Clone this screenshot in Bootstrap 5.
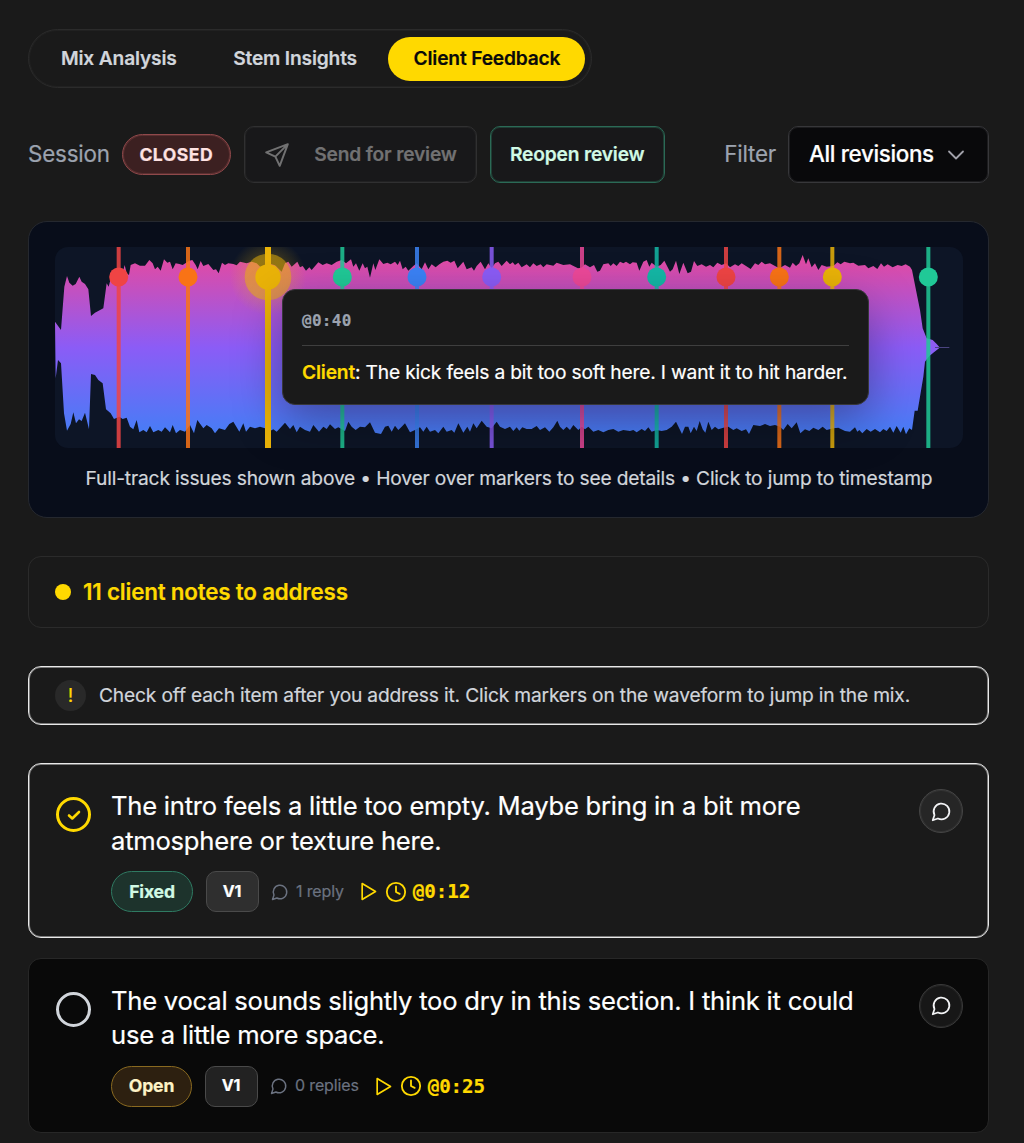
<!DOCTYPE html>
<html lang="en">
<head>
<meta charset="utf-8">
<meta name="viewport" content="width=device-width, initial-scale=1">
<title>Client Feedback</title>
<link href="https://cdn.jsdelivr.net/npm/bootstrap@5.3.0/dist/css/bootstrap.min.css" rel="stylesheet">
<style>
body{background:#1a1a1a;color:#fff;font-family:Inter,"Liberation Sans",sans-serif;font-size:19.2px;line-height:1.35;overflow:hidden;-webkit-text-stroke:.2px}
main *{letter-spacing:-.009em}
.page{padding:29px 35px 0 28px;gap:38px}
.page>*{flex:none}
svg{display:block;flex:none}
.ico{fill:none;stroke:currentColor;stroke-linecap:round;stroke-linejoin:round}
.tabs{width:564px;height:59px;padding:7px 6px 7px 7px;border:1px solid #2b2b2b;box-shadow:inset 0 0 0 1px #212121;border-radius:30px;font-weight:600;color:#d1d5db}
.tabs .nav-link{height:44px;padding:0 25px;color:#d1d5db;border-radius:22px;display:flex;align-items:center;white-space:nowrap}
.tabs .nav-link.active{background:#ffd900;color:#0a0a0a}
.tabs .nav-item+.nav-item{margin-left:6.500px}
.toolbar{height:57px}
.lbl{font-size:22.4px;color:#9ca3af}
.flt{margin-left:auto;margin-right:12px}
.pill{height:41px;padding:0 16px;border:1px solid;border-radius:21px;font-weight:700;font-size:17.6px;display:flex;align-items:center}
.pill-closed{background:#3c2021;border-color:#90494b;box-shadow:inset 0 0 0 1px #5a2f30;color:#fee2e2;letter-spacing:.45px;width:109px;justify-content:center}
.btn-line{height:57px;border:1px solid #303031;box-shadow:inset 0 0 0 1px #212122;border-radius:10px;background:#18181a;font-size:19.2px;font-weight:600;padding:0 19px;display:flex;align-items:center;white-space:nowrap}
.btn-send{color:#717172;width:233px;justify-content:space-between}
.btn-reopen{color:#d1fae5;border-color:#2b6a56;box-shadow:inset 0 0 0 1px #203d34;width:175px;justify-content:center}
.gap-start{margin-left:13px}
.pill-closed.gap-start{margin-left:12px}
.select-box{width:201px;height:57px;border:1px solid #37373a;box-shadow:inset 0 0 0 1px #1c1c1e;border-radius:10px;background:#09090b;font-size:22.4px;font-weight:500;letter-spacing:-.015em;padding:0 22px 0 20px}
.select-box span{letter-spacing:-.016em}
.chev{stroke:#a1a1aa}
.wave-card{height:297px;padding:25px 25px 25px 26px;border:1px solid #25282f;border-radius:19px;background:#080d1a}
.wave{height:201px;border-radius:13px;background:#0d1526;position:relative}
.wave>svg{border-radius:13px}
.hint{font-size:19.2px;color:#d1d5db;height:62px}
.tip{position:absolute;left:227px;top:42px;width:587px;height:116px;background:#1a1a1a;border:1px solid #37373a;border-radius:13px;padding:0 19px;box-shadow:0 16px 48px rgba(0,0,0,.35)}
.tip-time{height:56px;padding-top:6px;border-bottom:1px solid #3f3f3f;color:#9ca3af;font:700 16px "DejaVu Sans Mono",monospace;letter-spacing:.3px}
.tip-text{height:53px;white-space:nowrap}
.yel{color:#ffd900}
.notes{height:72px;border:1px solid #2b2b2b;border-radius:13px;padding:0 26px;font-size:22.4px;font-weight:600;gap:12px;color:#ffd900}
.spot{width:16px;height:16px;border-radius:50%;background:#ffd900}
.white-line{border:1px solid #e9e9e9;box-shadow:inset 0 0 0 1px #7a7a7a;border-radius:13px}
.tipbar{height:59px;padding:0 26px;gap:13px;color:#d1d5db}
.bang{width:31px;height:31px;border-radius:50%;background:#292929;font-size:19.2px}
.note-card{height:175px;padding:25px 25px 25px 26px}
.note-dark{margin-top:-18px;padding-top:24.500px;background:#090909;border:1px solid #272727;border-radius:13px}
.msg{font-size:25.6px;line-height:34.5px;width:770px;margin-bottom:13px}
.ring{width:35px;height:35px;border:3px solid #d1d5db;border-radius:50%;margin:8px 20px 0 1px;flex:none}
.ring-done{border-color:#ffd900;color:#ffd900}
.meta-row{height:41px}
.pill-fixed{background:#1d332c;border-color:#2f7a62;color:#d1fae5;width:82px;justify-content:center;padding:0}
.pill-open{background:#2d2010;border-color:#8a6a20;color:#fef3c7;width:81px;justify-content:center;padding:0}
.ver{width:53px;height:41px;border:1px solid #4a4a4a;border-radius:10px;background:#2f2f2f;font-size:16px;font-weight:700;margin:0 12.500px}
.ver-dim{background:#222}
.replies{font-size:16px;color:#6b7280;gap:7px}
.stamp{color:#ffd900;font:700 19.2px "DejaVu Sans Mono",monospace;margin-left:14px;letter-spacing:-.1px}
.clk{margin:0 6px 0 7px}
.round-btn{width:44px;height:44px;border:1px solid #454545;box-shadow:inset 0 0 0 1px #333;border-radius:50%;background:#262626;color:#f3f4f6;padding:0;flex:none}
.round-dim{background:#171717;border-color:#3a3a3a;box-shadow:inset 0 0 0 1px #262626}
</style>
</head>
<body>
<svg width="0" height="0" class="position-absolute">
<symbol id="bubble" viewBox="0 0 24 24"><path d="M7.9 20A9 9 0 1 0 4 16.1L2 22Z"/></symbol>
<symbol id="play" viewBox="0 0 24 24"><path d="M5 2.500l16 9.500-16 9.500z"/></symbol>
<symbol id="clock" viewBox="0 0 24 24"><circle cx="12" cy="12" r="10"/><path d="M12 6v6l4 2"/></symbol>
</svg>
<main class="page d-flex flex-column">
  <ul class="nav tabs flex-nowrap">
    <li class="nav-item"><a class="nav-link">Mix Analysis</a></li>
    <li class="nav-item"><a class="nav-link">Stem Insights</a></li>
    <li class="nav-item"><a class="nav-link active">Client Feedback</a></li>
  </ul>

  <div class="toolbar d-flex align-items-center">
    <span class="lbl">Session</span>
    <span class="pill pill-closed gap-start">CLOSED</span>
    <button class="btn-line btn-send gap-start">
      <svg class="ico" width="26" height="26" viewBox="0 0 24 24" stroke-width="1.800"><path d="M22 2 2 9.500l8.500 4 4 8.500zM22 2 10.500 13.500"/></svg>
      <span>Send for review</span>
    </button>
    <button class="btn-line btn-reopen gap-start">Reopen review</button>
    <span class="lbl flt">Filter</span>
    <div class="select-box d-flex align-items-center justify-content-between">
      <span>All revisions</span>
      <svg class="ico chev" width="20" height="20" viewBox="0 0 20 20" stroke-width="1.800"><path d="M3 6.500l7 7 7-7"/></svg>
    </div>
  </div>

  <section class="wave-card">
    <div class="wave">
      <svg width="908" height="201" viewBox="0 0 2724 603" preserveAspectRatio="none">
        <defs>
          <linearGradient id="tone" gradientUnits="userSpaceOnUse" x1="0" y1="0" x2="0" y2="603"><stop offset="0" stop-color="#ec4899"/><stop offset=".5" stop-color="#8b5cf6"/><stop offset="1" stop-color="#3b82f6"/></linearGradient>
          <radialGradient id="glow"><stop offset=".5" stop-color="#eab308" stop-opacity=".22"/><stop offset="1" stop-color="#eab308" stop-opacity="0"/></radialGradient>
        </defs>
        <path id="shape" fill="url(#tone)"/>
        <path d="M2640 301.500h43" stroke="#4a4480" stroke-width="3"/>
        <g id="pins"></g>
      </svg>
      <div class="tip">
        <div class="tip-time d-flex align-items-center">@0:40</div>
        <div class="tip-text d-flex align-items-center"><span><strong class="yel fw-semibold">Client</strong>: The kick feels a bit too soft here. I want it to hit harder.</span></div>
      </div>
    </div>
    <div class="hint d-flex align-items-center justify-content-center">Full-track issues shown above • Hover over markers to see details • Click to jump to timestamp</div>
  </section>

  <section class="notes d-flex align-items-center"><span class="spot"></span><span>11 client notes to address</span></section>

  <section class="tipbar white-line d-flex align-items-center">
    <span class="bang yel d-flex align-items-center justify-content-center">!</span>
    <span>Check off each item after you address it. Click markers on the waveform to jump in the mix.</span>
  </section>

  <article class="note-card white-line d-flex">
    <span class="ring ring-done d-flex align-items-center justify-content-center"><svg class="ico" width="14" height="14" viewBox="0 0 14 14" stroke-width="2.600"><path d="M2 7.500l3.300 3L12 4"/></svg></span>
    <div>
      <div class="msg">The intro feels a little too empty. Maybe bring in a bit more atmosphere or texture here.</div>
      <div class="meta-row d-flex align-items-center">
        <span class="pill pill-fixed">Fixed</span>
        <span class="ver d-flex align-items-center justify-content-center">V1</span>
        <span class="replies d-flex align-items-center"><svg class="ico" width="18" height="18" stroke-width="1.900"><use href="#bubble"/></svg>1 reply</span>
        <span class="stamp d-flex align-items-center"><svg class="ico" width="20" height="21" stroke-width="2"><use href="#play"/></svg><svg class="ico clk" width="22" height="22" stroke-width="2"><use href="#clock"/></svg>@0:12</span>
      </div>
    </div>
    <button class="round-btn d-flex align-items-center justify-content-center ms-auto"><svg class="ico" width="21" height="21" stroke-width="2"><use href="#bubble"/></svg></button>
  </article>

  <article class="note-card note-dark d-flex">
    <span class="ring"></span>
    <div>
      <div class="msg">The vocal sounds slightly too dry in this section. I think it could use a little more space.</div>
      <div class="meta-row d-flex align-items-center">
        <span class="pill pill-open">Open</span>
        <span class="ver ver-dim d-flex align-items-center justify-content-center">V1</span>
        <span class="replies d-flex align-items-center"><svg class="ico" width="18" height="18" stroke-width="1.900"><use href="#bubble"/></svg>0 replies</span>
        <span class="stamp d-flex align-items-center"><svg class="ico" width="20" height="21" stroke-width="2"><use href="#play"/></svg><svg class="ico clk" width="22" height="22" stroke-width="2"><use href="#clock"/></svg>@0:25</span>
      </div>
    </div>
    <button class="round-btn round-dim d-flex align-items-center justify-content-center ms-auto"><svg class="ico" width="21" height="21" stroke-width="2"><use href="#bubble"/></svg></button>
  </article>
</main>
<script src="https://cdn.jsdelivr.net/npm/bootstrap@5.3.0/dist/js/bootstrap.bundle.min.js"></script>
<script>
// Waveform outline, in chunks: [x shift, y shift, "x,y x,y ..."]; upper edge left to right, then lower edge back.
const chunks = [
[-75,-81,"75,305 93,330 103,200 111,168 118,188 128,197 137,192 148,170 155,185 165,192 175,208 183,288 195,278 220,265 230,190 236,200 245,165 262,160 275,170 284,135 290,160 297,165 302,135 315,130 330,137 345,137 358,120 368,130 375,148 383,140 392,152 402,118 412,128 420,125 428,148 437,130 448,132 458,135 478,122 487,120 497,135 503,148 512,123 520,138 535,132 550,150 558,148 566,160 576,128 585,135 595,130 610,132 620,136 630,125 650,130 665,125 680,130 695,145 703,142 710,130 722,132 735,136 755,155 765,130"],
[645,-51,"55,95 65,110 82,95 90,112 98,108 108,122 118,112 125,120 145,97 158,105 170,100 185,105 200,95 215,90 228,100 243,88 250,110 258,100 268,122 278,100 285,115 292,110 300,143 310,100 316,120 328,88 340,102 352,98 362,103 375,95 383,105 390,92 398,118 407,110 415,122 430,108 440,100 455,118 465,97 475,118 485,103 497,112 508,103 520,95 532,92 542,98 553,92 563,115 580,95 590,118 605,112 612,122 620,108 632,95 645,118 655,100 665,115 675,100 685,95 695,108 710,92 720,103 728,97 735,105 745,98 755,112 770,103 780,112 790,100 800,108 812,103 820,112 830,103 850,107 860,98 880,105 900,103 915,110 930,118 945,103 960,112 972,105 982,125 990,122 1000,103 1015,100 1022,108 1030,100 1040,108 1050,95 1060,100 1068,95 1080,103"],
[1695,-51,"38,97 50,98 58,122 70,95 80,90 88,110 95,98 110,110 122,105 133,92 150,125 158,118 168,92 178,132 190,98 203,130 213,125 222,93 232,108 245,103 258,110 270,105 280,112 292,98 305,105 318,100 330,112 345,103 355,108 365,100 378,108 392,117 405,100 415,105 425,95 435,103 450,100 465,108 478,115 495,105 510,113 518,98 528,108 538,100 548,75 558,103 565,85 575,112 585,100 595,120 605,105 620,110 640,108 652,97 662,103 673,95 690,100 700,98 715,107 735,105 745,115 760,108 772,117 783,100 792,110 803,103 818,112 833,105 845,108 857,103 870,110 876,120 882,150 892,200 900,240 908,295 920,325 938,330 950,342 958,351 958,354 940,368 928,378 915,395 910,440 900,500 893,542 884,542 876,600 868,595 858,613 850,590 842,608 830,588 820,608 810,590 800,603 790,597 780,607 765,597 752,605 740,597 727,610 718,600 712,605 705,592 690,605 675,603 655,593 640,595 620,600 608,590 595,600 580,593 568,603 555,598 541,610 530,577 515,595 503,582 490,600 480,590 465,585 450,588 435,582 420,588 400,585 387,612 378,598 365,603 350,595 340,600 325,590 310,593 295,598 285,590 275,600 265,575 256,608 248,598 239,573 230,603 222,590 212,610 205,590 195,590 186,612 168,575 155,590 140,600 125,603 110,600 95,605 85,592 75,603 65,597 50,607 40,600 30,603"],
[645,-51,"1060,600 1045,605 1030,597 1015,600 1000,607 985,600 970,605 955,590 945,598 935,590 925,600 910,585 900,600 890,590 880,600 870,590 862,572 850,592 838,605 825,592 810,600 800,588 785,597 770,597 757,592 748,602 740,592 730,603 720,590 705,597 690,590 680,575 665,595 650,590 635,572 620,595 610,580 600,605 592,590 580,608 565,580 553,608 545,600 530,605 520,590 505,610 495,600 480,605 470,590 460,605 450,592 435,600 420,607 405,580 395,590 385,600 375,587 365,605 355,587 345,590 333,612 315,608 300,577 285,592 270,590 257,600 245,590 235,575 225,603 205,592 195,597 180,583 170,597 160,590 147,605 130,585 120,605 105,600 90,590 80,607 70,585 60,597 45,578 30,595 20,605 10,598 0,603"],
[-75,-81,"705,625 690,620 675,625 660,620 648,635 640,610 628,635 610,605 598,612 585,630 567,625 555,640 545,625 530,615 520,625 502,600 492,640 480,615 465,635 450,630 438,640 428,615 420,637 405,622 395,635 385,630 370,637 360,618 350,637 340,630 328,637 320,600 310,628 300,620 290,593 278,597 268,590 252,597 242,580 228,568 218,490 205,480 195,465 183,462 177,628 165,578 155,603 147,598 138,610 130,577 122,612 111,632 102,580 93,430 84,420 77,475"]];
document.getElementById('shape').setAttribute('d', 'M' + chunks.map(([dx, dy, s]) =>
  s.split(' ').map(p => { const [x, y] = p.split(',').map(Number); return (x + dx) + ' ' + (y + dy); }).join('L')).join('L') + 'Z');

// Markers: [x, colour, active]
const pins = [[191,'#ef4444'],[399,'#f97316'],[639,'#eab308',1],[862,'#20c997'],[1086,'#3b82f6'],[1310,'#8b5cf6'],[1581,'#ec4899'],[1805,'#14b8a6'],[2013,'#ef4444'],[2173,'#f97316'],[2332,'#eab308'],[2620,'#20c997']];
document.getElementById('pins').innerHTML = pins.map(([x, c, on]) =>
  (on ? `<circle cx="${x}" cy="90" r="115" fill="url(#glow)"/><circle cx="${x}" cy="90" r="70" fill="${c}" opacity=".5"/>` : '') +
  `<rect x="${x - (on ? 9 : 6)}" width="${on ? 18 : 12}" height="603" fill="${c}" opacity="${on ? 1 : .85}"/><circle cx="${x}" cy="90" r="${on ? 38 : 28.5}" fill="${c}"/>`).join('');
</script>
</body>
</html>
